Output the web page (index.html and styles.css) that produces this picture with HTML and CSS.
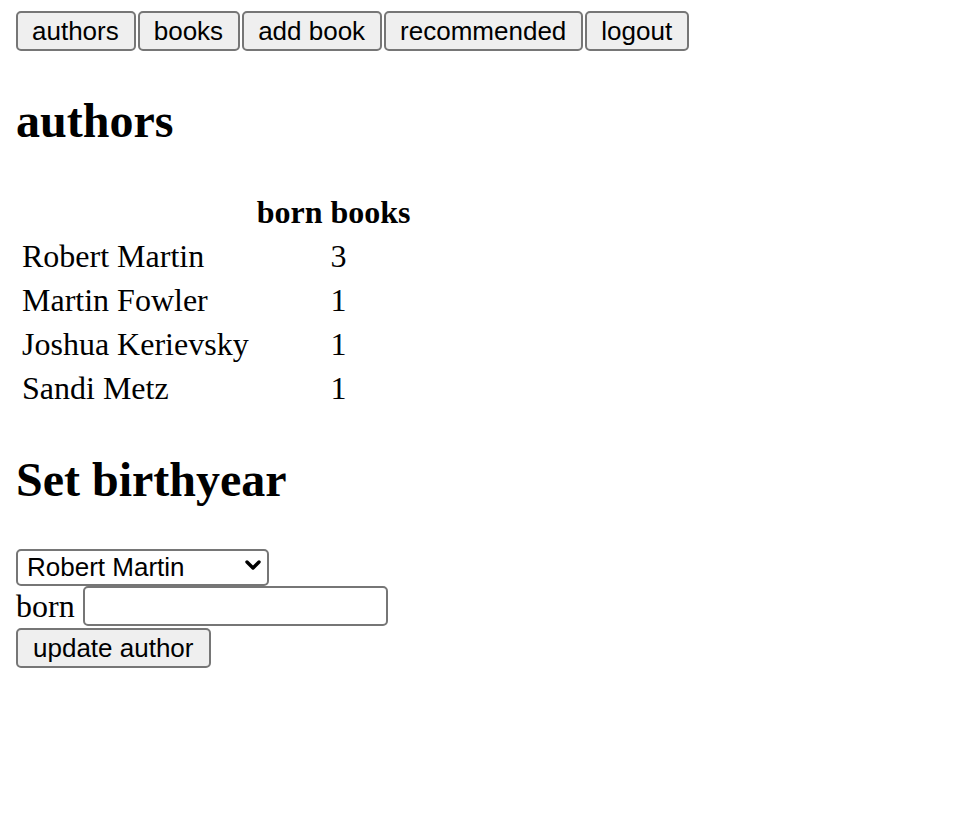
FILE: index.html
```html
<!DOCTYPE html>
<html>
<head>
<meta charset="utf-8">
<link rel="stylesheet" href="styles.css">
</head>
<body>
<div class="nav">
<button class="btn">authors</button>
<button class="btn">books</button>
<button class="btn">add book</button>
<button class="btn">recommended</button>
<button class="btn">logout</button>
</div>
<div>
<h2 class="title">authors</h2>
<table class="authors">
<tbody>
<tr><th></th><th>born</th><th>books</th></tr>
<tr><td>Robert Martin</td><td></td><td>3</td></tr>
<tr><td>Martin Fowler</td><td></td><td>1</td></tr>
<tr><td>Joshua Kerievsky</td><td></td><td>1</td></tr>
<tr><td>Sandi Metz</td><td></td><td>1</td></tr>
</tbody>
</table>
<h2 class="title">Set birthyear</h2>
<form class="birth">
<div class="select-wrap">
<select class="select">
<option>Robert Martin</option>
<option>Martin Fowler</option>
<option>Joshua Kerievsky</option>
<option>Sandi Metz</option>
</select>
<svg class="chevron" width="16" height="12" viewBox="0 0 16 12"><path d="M2 3 L8 9 L14 3" fill="none" stroke="#000" stroke-width="3.4" stroke-linecap="round" stroke-linejoin="round"/></svg>
</div>
<div class="born-row">born <input class="input" type="text"></div>
<button type="button" class="btn update">update author</button>
</form>
</div>
</body>
</html>
```
FILE: styles.css
```css
body {
  margin: 0;
  padding: 11px 16px 16px;
  font-family: "Liberation Serif", "Times New Roman", serif;
  font-size: 32px;
  color: #000;
  background: #fff;
}
.nav {
  display: flex;
  gap: 2px;
  height: 40px;
}
.btn {
  box-sizing: border-box;
  height: 40px;
  margin: 0;
  padding: 0 15px 0 14px;
  font-family: "Liberation Sans", Arial, sans-serif;
  font-size: 26px;
  line-height: 36px;
  color: #000;
  background: #efefef;
  border: 2px solid #767676;
  border-radius: 5px;
}
.title {
  font-size: 48px;
  font-weight: bold;
  line-height: 55px;
  margin: 42px 0 38px;
}
.authors {
  border-spacing: 4px;
  border-collapse: separate;
}
.authors th,
.authors td {
  padding: 4px 2px 0;
  line-height: 36px;
  font-size: 32px;
}
.authors td {
  text-align: left;
}
.birth {
  display: flex;
  flex-direction: column;
  align-items: flex-start;
  margin: 0;
}
.select-wrap {
  position: relative;
  margin-top: 2px;
  height: 38px;
}
.select {
  appearance: none;
  -webkit-appearance: none;
  box-sizing: border-box;
  width: 253px;
  height: 37px;
  margin: 0;
  padding: 0 0 0 9px;
  font-family: "Liberation Sans", Arial, sans-serif;
  font-size: 26px;
  color: #000;
  background: #fff;
  border: 2px solid #767676;
  border-radius: 5px;
}
.chevron {
  position: absolute;
  right: 8px;
  top: 12px;
  pointer-events: none;
}
.born-row {
  display: flex;
  align-items: center;
  gap: 8px;
  height: 41px;
  line-height: 36px;
}
.input {
  box-sizing: border-box;
  width: 305px;
  height: 40px;
  margin: 0;
  padding: 0 4px;
  font-size: 26px;
  font-family: "Liberation Sans", Arial, sans-serif;
  border: 2px solid #767676;
  border-radius: 5px;
  background: #fff;
}
.update {
  margin-top: 2px;
  padding: 0 16px 0 15px;
}
```
